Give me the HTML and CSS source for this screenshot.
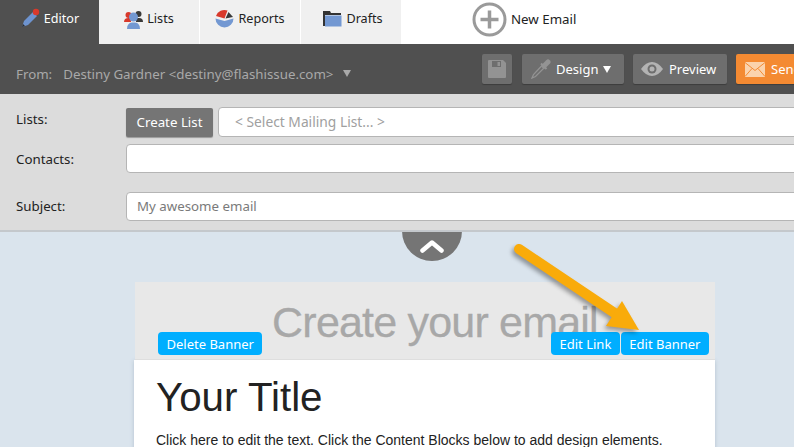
FILE: index.html
```html
<!DOCTYPE html>
<html lang="en">
<head>
    <meta charset="UTF-8">
    <meta name="viewport" content="width=device-width, initial-scale=1.0">
    <title>Email Editor</title>
    <link rel="stylesheet" href="styles.css">
</head>
<body>
    <div class="page">
        <!-- Tabs -->
        <div class="tabs">
            <div class="tab tab-active tab-editor">
                <svg class="tab-icon" width="20" height="22" viewBox="0 0 20 22">
                    <path d="M2 19 L4 13 L13 4 L17 8 L8 17 Z" fill="#6d93cf"/>
                    <path d="M2 19 L3 16 L5 18 Z" fill="#2c2c2c"/>
                    <circle cx="16" cy="4" r="3.2" fill="#d8392b"/>
                </svg>
                Editor
            </div>
            <div class="tab tab-lists">
                <svg class="tab-icon" width="19" height="20" viewBox="0 0 19 20">
                    <circle cx="4.5" cy="6" r="3" fill="#d8392b"/>
                    <path d="M0 13 Q0 9 4.500 9 L7 9 L7 13 Z" fill="#d8392b"/>
                    <circle cx="14.500" cy="5" r="3" fill="#3a3a3a"/>
                    <path d="M12 9 L15 9 Q19 9 19 13 L12 13 Z" fill="#3a3a3a"/>
                    <circle cx="9.500" cy="8" r="4.500" fill="#7398d2"/>
                    <path d="M3 20 Q3 14 8 13.500 L11 13.500 Q16 14 16 20 Z" fill="#7398d2"/>
                </svg>
                Lists
            </div>
            <div class="tab tab-reports">
                <svg class="tab-icon" width="19" height="19" viewBox="0 0 19 19">
                    <path d="M0.500 9.500 A9 9 0 0 0 18.500 9.500 L9.500 12 Z" fill="#7398d2"/>
                    <path d="M1 7 A9 9 0 0 1 12.500 1.500 L9.500 9.500 Z" fill="#d8392b"/>
                    <path d="M13.500 3 L18 8 L10.500 9.500 Z" fill="#3a3a3a"/>
                </svg>
                Reports
            </div>
            <div class="tab tab-drafts">
                <svg class="tab-icon" width="19" height="17" viewBox="0 0 19 17">
                    <path d="M0 1 L7 1 L8 3 L18 3 L18 5 L2 5 L2 16 L0 16 Z" fill="#333"/>
                    <path d="M2 5.500 L18.500 5.500 L18.500 16.500 L2 16.500 Z" fill="#7398d2"/>
                </svg>
                Drafts
            </div>
            <div class="new-email">
                <svg width="35" height="35" viewBox="0 0 35 35">
                    <circle cx="17.500" cy="17.500" r="15.500" fill="none" stroke="#9a9a9a" stroke-width="3"/>
                    <path d="M17.500 8.500 V26.500 M8.500 17.500 H26.500" stroke="#9a9a9a" stroke-width="3.500"/>
                </svg>
                New Email
            </div>
        </div>

        <!-- From bar -->
        <div class="toolbar">
            <div class="from">
                <span class="from-label">From:</span>
                <span>Destiny Gardner &lt;destiny@flashissue.com&gt;</span>
                <span class="from-caret"></span>
            </div>
            <div class="actions">
                <button class="btn btn-save">
                    <svg width="18" height="18" viewBox="0 0 18 18">
                        <path d="M0 1 Q0 0 1 0 L15 0 L18 3 L18 17 Q18 18 17 18 L1 18 Q0 18 0 17 Z" fill="#939393"/>
                        <path d="M4 1 H13 V7 H4 Z" fill="#6e6e6e"/>
                        <path d="M9.500 2 H12 V6 H9.500 Z" fill="#939393"/>
                    </svg>
                </button>
                <button class="btn btn-design">
                    <svg width="20" height="20" viewBox="0 0 20 20">
                        <path d="M11.500 6 L2.500 15.500 L1 19 L4.500 17.500 L14 8" fill="none" stroke="#939393" stroke-width="1.300"/>
                        <path d="M13 7 L17 3" stroke="#939393" stroke-width="5" stroke-linecap="round"/>
                        <path d="M10 4.500 L15.500 10" stroke="#939393" stroke-width="2"/>
                    </svg>
                    <span class="btn-text">Design</span>
                    <span class="btn-caret"></span>
                </button>
                <button class="btn btn-preview">
                    <svg width="22" height="14" viewBox="0 0 22 14">
                        <path d="M0 7 Q5 0 11 0 Q17 0 22 7 Q17 14 11 14 Q5 14 0 7 Z" fill="#b3b3b3"/>
                        <circle cx="11" cy="7" r="4.500" fill="#6e6e6e"/>
                        <circle cx="11" cy="7" r="2.500" fill="#b3b3b3"/>
                    </svg>
                    <span class="btn-text">Preview</span>
                </button>
                <button class="btn btn-send">
                    <svg width="20" height="15" viewBox="0 0 20 15">
                        <rect width="20" height="15" fill="#fbd3ad"/>
                        <path d="M0 0.500 L10 8.500 L20 0.500 M0 14.500 L7 6.500 M20 14.500 L13 6.500" fill="none" stroke="#f48a32" stroke-width="1"/>
                    </svg>
                    <span class="btn-text">Send</span>
                </button>
            </div>
        </div>

        <!-- Recipients form -->
        <div class="form">
            <div class="form-row form-row-lists">
                <label class="form-label">Lists:</label>
                <button class="create-list">Create List</button>
                <div class="field field-select">&lt; Select Mailing List... &gt;</div>
            </div>
            <div class="form-row form-row-contacts">
                <label class="form-label">Contacts:</label>
                <div class="field field-contacts"></div>
            </div>
            <div class="form-row form-row-subject">
                <label class="form-label">Subject:</label>
                <div class="field field-subject">My awesome email</div>
            </div>
        </div>

        <!-- Canvas -->
        <div class="workspace">
            <div class="collapse">
                <svg width="24" height="14" viewBox="0 0 24 14">
                    <path d="M2.500 11.500 L12 3.500 L21.500 11.500" fill="none" stroke="#fff" stroke-width="4.500" stroke-linecap="round" stroke-linejoin="round"/>
                </svg>
            </div>
            <div class="email">
                <div class="banner">
                    <div class="banner-text">Create your email</div>
                    <div class="banner-actions">
                        <button class="banner-btn">Delete Banner</button>
                        <div class="banner-right">
                            <button class="banner-btn">Edit Link</button>
                            <button class="banner-btn">Edit Banner</button>
                        </div>
                    </div>
                </div>
                <div class="content">
                    <h1>Your Title</h1>
                    <p>Click here to edit the text. Click the Content Blocks below to add design elements.</p>
                </div>
            </div>
        </div>

        <!-- Annotation arrow -->
        <svg class="arrow" width="140" height="100" viewBox="0 0 140 100">
            <path d="M8 7 L108 74" fill="none" stroke="#f9ab0a" stroke-width="10" stroke-linecap="round"/>
            <path d="M111 59 L95 84 L128 88 Z" fill="#f9ab0a"/>
        </svg>
    </div>
</body>
</html>
```

FILE: styles.css
```css
html, body {
    margin: 0;
    height: 100%;
    overflow: hidden;
}
body {
    background: #dae4ed;
    font-family: "Noto Sans", sans-serif;
    font-size: 13.3px;
}
.page {
    position: relative;
    width: 849px;
}
button {
    font-family: inherit;
    border: none;
    padding: 0;
}

.tabs {
    display: flex;
    align-items: center;
    height: 44px;
    background: white;
    color: #222;
}
.tab {
    display: flex;
    align-items: center;
    justify-content: center;
    gap: 4px;
    height: 44px;
    width: 100px;
    margin-right: 1px;
    padding-bottom: 7px;
    box-sizing: border-box;
    background: #f0f0f0;
    font-size: 12.6px;
}
.tab-active {
    width: 99px;
    margin-right: 0;
    background: #505050;
    color: white;
}
.tab-drafts {
    margin-right: 0;
    padding-left: 4px;
}
.new-email {
    display: flex;
    align-items: center;
    gap: 4px;
    margin-left: 71px;
    padding-bottom: 6px;
}

.toolbar {
    display: flex;
    align-items: center;
    justify-content: space-between;
    height: 50px;
    background: #505050;
    color: #a9a9a9;
    padding-left: 16px;
    box-sizing: border-box;
}
.from {
    display: flex;
    align-items: center;
    gap: 11px;
    padding-top: 9px;
}
.from-caret {
    width: 0;
    height: 0;
    margin-left: -1px;
    border-left: 4px solid transparent;
    border-right: 4px solid transparent;
    border-top: 7px solid #a9a9a9;
}
.actions {
    display: flex;
    gap: 9px;
}
.btn {
    display: flex;
    align-items: center;
    gap: 6px;
    height: 30px;
    border-radius: 2px;
    background: #6e6e6e;
    color: white;
    font-size: 13px;
    box-shadow: 0 1px 1px rgba(0, 0, 0, 0.25);
}
.btn-save {
    justify-content: center;
    width: 30px;
    margin-right: 1px;
}
.btn-design {
    width: 102px;
    padding-left: 9px;
    box-sizing: border-box;
    gap: 5px;
}
.btn-caret {
    width: 0;
    height: 0;
    border-left: 4px solid transparent;
    border-right: 4px solid transparent;
    border-top: 7px solid white;
}
.btn-preview {
    width: 94px;
    padding-left: 8px;
    box-sizing: border-box;
}
.btn-send {
    width: 113px;
    padding-left: 9px;
    box-sizing: border-box;
    background: #f48a32;
}

.form {
    position: relative;
    z-index: 1;
    height: 138px;
    box-sizing: border-box;
    background: #dcdcdc;
    border-bottom: 2px solid #c4c8cc;
    color: #222;
    padding-top: 13px;
}
.form-row {
    display: flex;
    align-items: center;
}
.form-label {
    width: 126px;
    padding-left: 16px;
    box-sizing: border-box;
}
.form-row-lists .form-label {
    margin-top: -7px;
}
.form-row-contacts {
    margin-top: 7px;
}
.form-row-subject {
    margin-top: 19px;
}
.form-row-subject .form-label {
    margin-top: -2px;
}
.create-list {
    width: 87px;
    height: 29px;
    border-radius: 2px;
    background: #757575;
    color: white;
    font-size: 13.3px;
    box-shadow: 0 1px 1px rgba(0, 0, 0, 0.3);
}
.field {
    flex: 1;
    height: 29px;
    line-height: 27px;
    box-sizing: border-box;
    border: 1px solid #b5b5b5;
    border-radius: 4px;
    background: white;
    color: #7a7a7a;
    padding-left: 10px;
}
.field-select {
    height: 30px;
    line-height: 28px;
    margin-left: 5px;
    padding-left: 16px;
    color: #a0a0a0;
    font-size: 13.8px;
}

.workspace {
    position: relative;
    padding-top: 50px;
}
.collapse {
    position: absolute;
    top: -1px;
    left: 402px;
    display: flex;
    align-items: flex-end;
    justify-content: center;
    box-sizing: border-box;
    width: 60px;
    height: 30px;
    padding-bottom: 8px;
    background: #757575;
    border-radius: 0 0 30px 30px;
}
.email {
    width: 581px;
    margin-left: 134px;
}
.banner {
    position: relative;
    height: 78px;
    margin-left: 1px;
    background: #e8e8e8;
    border-bottom: 1px solid #dedede;
    box-sizing: border-box;
}
.banner-text {
    text-align: center;
    font-family: "Liberation Sans", sans-serif;
    font-size: 43px;
    line-height: 80px;
    letter-spacing: -0.800px;
    color: #a8a8a8;
    padding-left: 20px;
    -webkit-text-stroke: 0.3px #a8a8a8;
}
.banner-actions {
    position: absolute;
    left: 23px;
    right: 6px;
    bottom: 4px;
    display: flex;
    justify-content: space-between;
}
.banner-right {
    display: flex;
    gap: 1px;
}
.banner-btn {
    height: 23px;
    padding: 0 8.500px;
    border-radius: 4px;
    background: #00aeff;
    color: white;
    font-size: 13px;
}
.content {
    background: white;
    padding: 15px 22px 40px;
    box-shadow: 0 1px 4px rgba(120, 140, 160, 0.4);
    font-family: "Liberation Sans", sans-serif;
    color: #222;
}
h1 {
    margin: 0;
    font-size: 40.300px;
    font-weight: 400;
    line-height: 46px;
}
p {
    margin: 11px 0 0;
    font-size: 14px;
    white-space: nowrap;
}

.arrow {
    position: absolute;
    left: 511px;
    top: 242px;
    filter: drop-shadow(-2px 3px 2px rgba(0, 0, 0, 0.35));
}
```
